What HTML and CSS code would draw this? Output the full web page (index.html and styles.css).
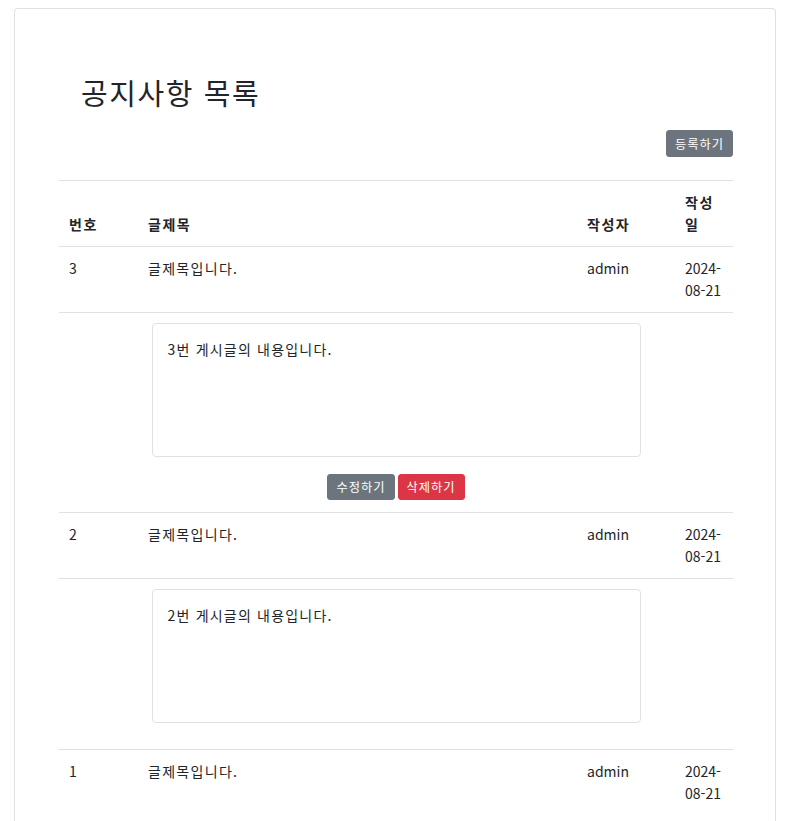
FILE: index.html
```html
<!DOCTYPE html>
<html lang="ko">
<head>
<meta charset="utf-8">
<title>공지사항 목록</title>
<link rel="stylesheet" href="styles.css">
</head>
<body>
<div class="card">
  <h1 class="title">공지사항 목록</h1>
  <div class="toolbar">
    <button class="btn btn-secondary">등록하기</button>
  </div>
  <table class="board">
    <colgroup>
      <col class="c-no"><col class="c-title"><col class="c-writer"><col class="c-date">
    </colgroup>
    <thead>
      <tr><th>번호</th><th>글제목</th><th>작성자</th><th>작성일</th></tr>
    </thead>
    <tbody>
      <tr><td>3</td><td class="ko">글제목입니다.</td><td>admin</td><td>2024-08-21</td></tr>
      <tr class="detail">
        <td colspan="4">
          <div class="content">3번 게시글의 내용입니다.</div>
          <div class="actions">
            <button class="btn btn-secondary">수정하기</button>
            <button class="btn btn-danger">삭제하기</button>
          </div>
        </td>
      </tr>
      <tr><td>2</td><td class="ko">글제목입니다.</td><td>admin</td><td>2024-08-21</td></tr>
      <tr class="detail">
        <td colspan="4">
          <div class="content">2번 게시글의 내용입니다.</div>
          <div class="spacer"></div>
        </td>
      </tr>
      <tr class="last"><td>1</td><td class="ko">글제목입니다.</td><td>admin</td><td>2024-08-21</td></tr>
    </tbody>
  </table>
</div>
</body>
</html>
```
FILE: styles.css
```css
html, body {
  margin: 0;
  padding: 0;
  background: #fff;
}
body {
  font-family: "Noto Sans CJK KR", "Noto Sans", sans-serif;
  font-size: 14px;
  line-height: 22px;
  color: #212529;
}
.card {
  margin: 8px 13px 0 14px;
  border: 1px solid #dee2e6;
  border-bottom: none;
  border-radius: 4px 4px 0 0;
  padding: 65px 42px 40px 44px;
  min-height: 820px;
}
.title {
  margin: 0 0 0 22px;
  font-size: 29px;
  line-height: 36px;
  font-weight: 400;
  letter-spacing: 1.6px;
}
.toolbar {
  display: flex;
  justify-content: flex-end;
  margin-top: 20px;
  margin-bottom: 23px;
}
.btn {
  font-family: inherit;
  font-size: 12.25px;
  line-height: 18px;
  padding: 4px 8px 3px;
  border: 1px solid transparent;
  border-radius: 3px;
  color: #fff;
  letter-spacing: 1px;
  cursor: pointer;
}
.btn-secondary { background: #6c757d; border-color: #6c757d; }
.btn-danger { background: #dc3545; border-color: #dc3545; }
.board {
  width: 674px;
  border-collapse: collapse;
  table-layout: fixed;
}
.c-no { width: 79px; }
.c-title { width: 439px; }
.c-writer { width: 98px; }
.c-date { width: 58px; }
.board th, .board td {
  padding: 10px 10px 11px;
  border-top: 1px solid #dee2e6;
  text-align: left;
  vertical-align: top;
}
.board th {
  font-weight: 700;
  vertical-align: bottom;
  letter-spacing: 1.5px;
}
.board thead th {
  border-bottom: 1px solid #dee2e6;
}
.board td {
  word-break: break-all;
}
.board td.ko {
  letter-spacing: 1.3px;
}
.detail td {
  padding: 10px 10px 12px;
}
.content {
  width: 457px;
  height: 102px;
  margin: 0 auto;
  padding: 14px 15px 16px;
  border: 1px solid #dee2e6;
  border-radius: 4px;
  letter-spacing: 1.2px;
}
.actions {
  display: flex;
  justify-content: center;
  gap: 3px;
  margin-top: 17px;
}
.actions .btn {
  padding: 3px 8px;
}
.spacer {
  height: 14px;
}
```
